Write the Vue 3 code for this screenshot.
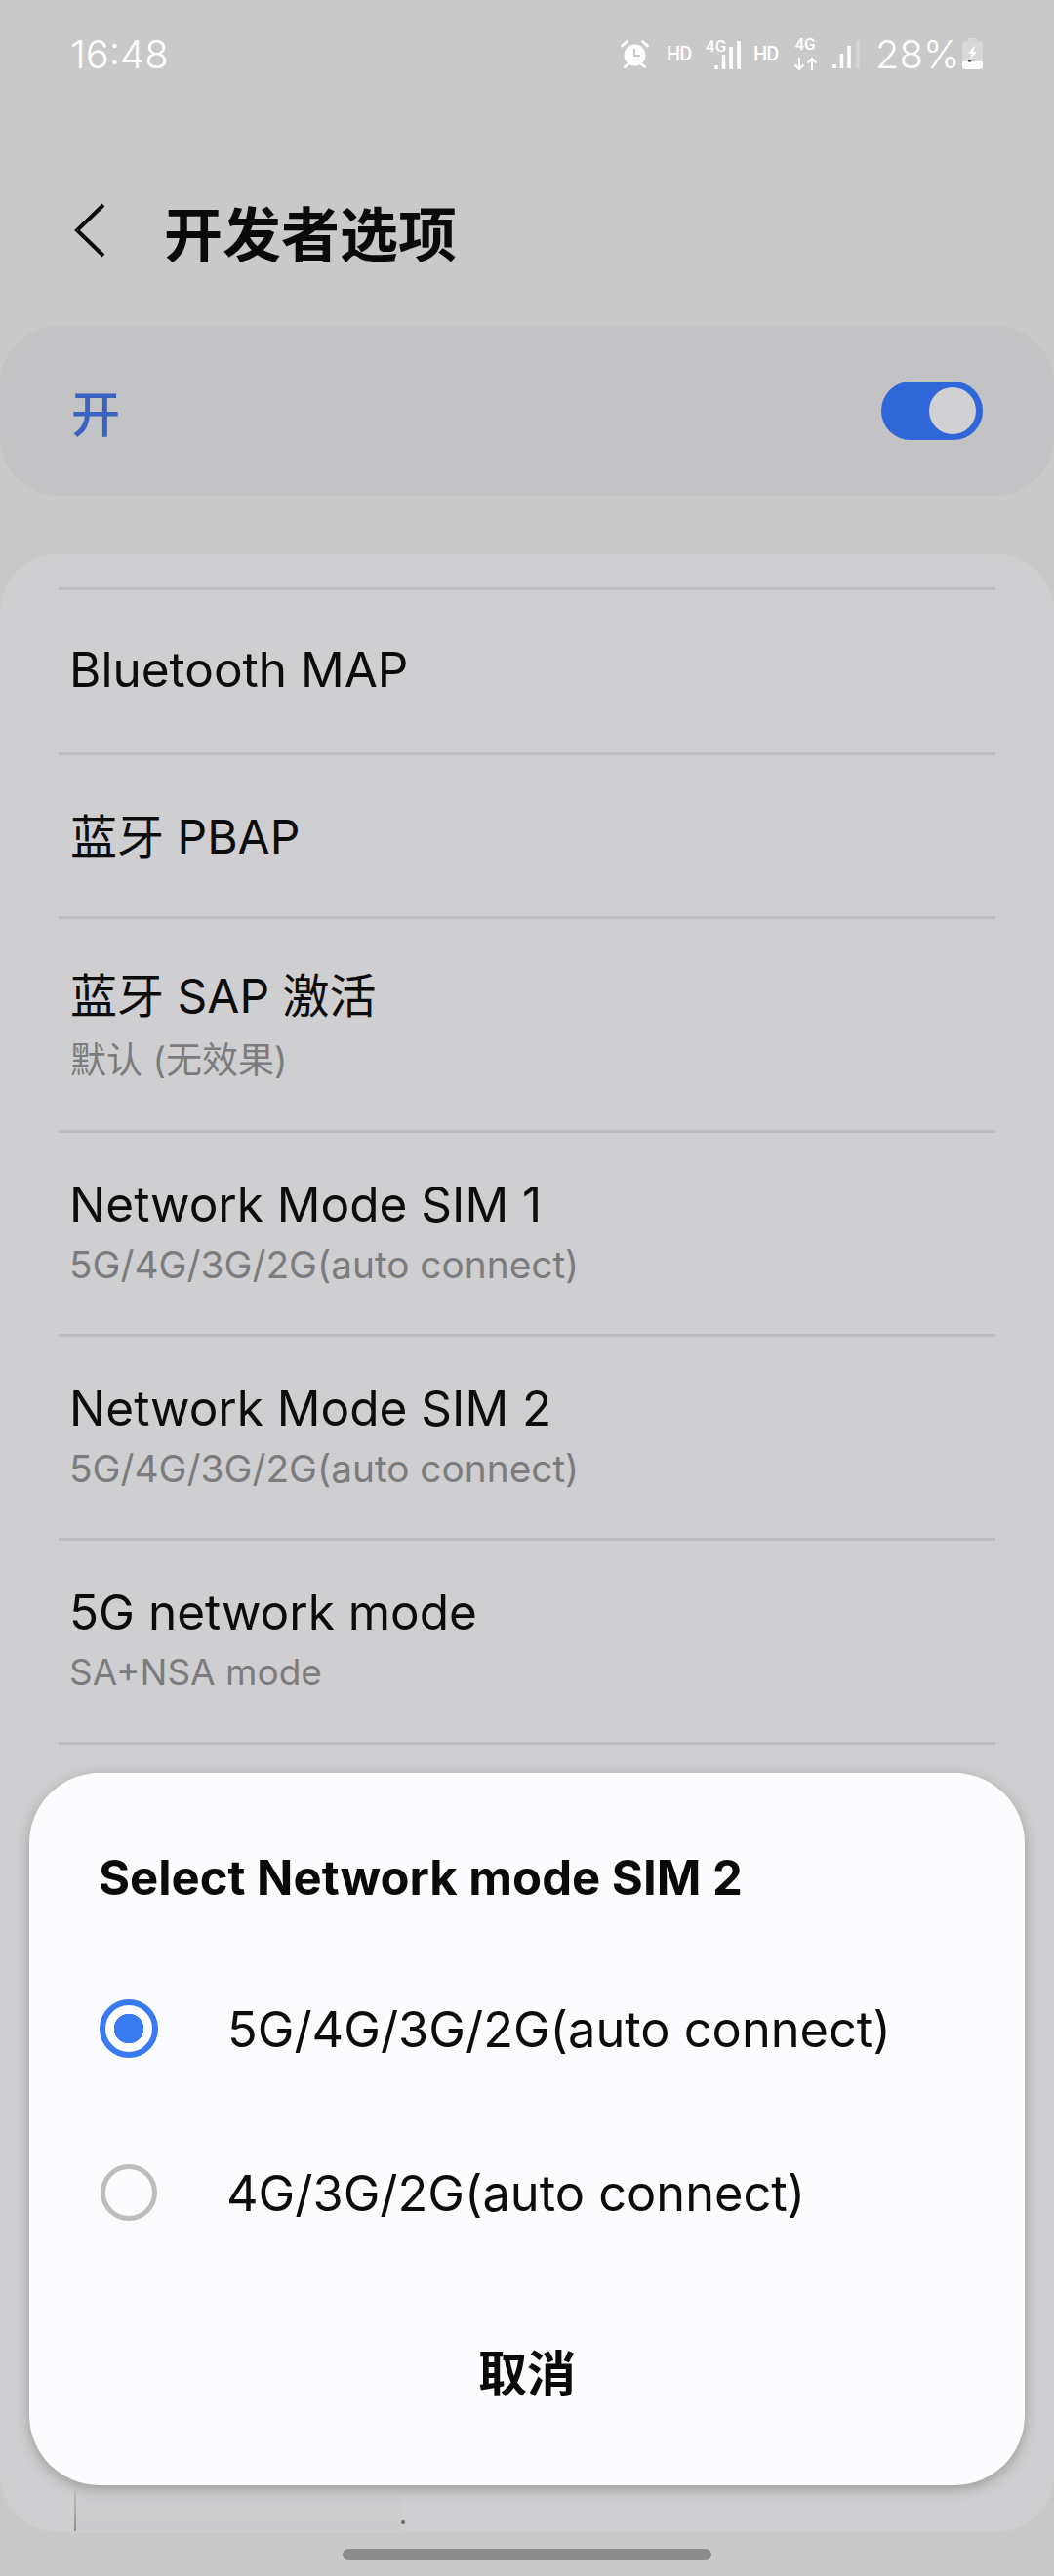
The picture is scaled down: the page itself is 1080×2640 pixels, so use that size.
<script setup>
const rows = [
  { title: "Bluetooth MAP", h: 169 },
  { title: "蓝牙 PBAP", h: 168, cjk: true },
  { title: "蓝牙 SAP 激活", sub: "默认 (无效果)", h: 219, cjk: true },
  { title: "Network Mode SIM 1", sub: "5G/4G/3G/2G(auto connect)", h: 209 },
  { title: "Network Mode SIM 2", sub: "5G/4G/3G/2G(auto connect)", h: 209 },
  { title: "5G network mode", sub: "SA+NSA mode", h: 209, small: true },
];
const options = [
  { label: "5G/4G/3G/2G(auto connect)", on: true },
  { label: "4G/3G/2G(auto connect)", on: false },
];
</script>

<template>
  <div class="screen">
    <div class="status">
      <span class="time">16:48</span>
      <div class="status-right">
        <svg class="alarm" width="29" height="29" viewBox="0 0 29 29">
          <circle cx="14.5" cy="15.500" r="11" fill="#fff" />
          <path d="M14 9v7h6" fill="none" stroke="#c9c9c9" stroke-width="2.200" />
          <path d="M1.500 6l5-4.500M27.500 6l-5-4.500" stroke="#fff" stroke-width="2.800" stroke-linecap="round" />
          <path d="M4.500 27.500l3-2.500M24.500 27.500l-3-2.500" stroke="#fff" stroke-width="2.800" stroke-linecap="round" />
        </svg>
        <span class="hd hd1">HD</span>
        <div class="net1">
          <span class="g4">4G</span>
          <svg width="28" height="29" viewBox="0 0 28 29">
            <path d="M2 29v-4M9.500 29V14M17 29V6M25 29V0" stroke="#fff" stroke-width="3.500" fill="none" />
          </svg>
        </div>
        <span class="hd hd2">HD</span>
        <div class="net2">
          <span class="g4">4G</span>
          <svg width="25" height="13" viewBox="0 0 25 13">
            <path d="M6 0v12M1.500 7.500L6 12l4.500-4.500M19 13V1M14.500 5.500L19 1l4.500 4.500" stroke="#fff" stroke-width="2" fill="none" />
          </svg>
        </div>
        <svg class="bars2" width="30" height="29" viewBox="0 0 30 29">
          <path d="M2 29v-4M9.500 29V14M17 29V6" stroke="#fff" stroke-width="3.500" fill="none" />
          <path d="M26 29V0" stroke="#d6d6d6" stroke-width="3.500" fill="none" />
        </svg>
        <span class="pct">28%</span>
        <svg class="batt" width="21" height="32" viewBox="0 0 21 32">
          <path d="M6 0h9v3h3a3 3 0 0 1 3 3v23a3 3 0 0 1-3 3H3a3 3 0 0 1-3-3V6a3 3 0 0 1 3-3h3z" fill="#d8d8d8" />
          <path d="M0 24h21v5a3 3 0 0 1-3 3H3a3 3 0 0 1-3-3z" fill="#fff" />
          <path d="M13 7l-7 9h4l-2 6 7-8h-4z" fill="#fff" />
          <rect x="6" y="23" width="3" height="1.500" fill="#444" />
        </svg>
      </div>
    </div>

    <div class="header">
      <svg class="back" width="34" height="56" viewBox="0 0 34 56">
        <path d="M31 2L4 28l27 26" fill="none" stroke="#0a0a0a" stroke-width="4" />
      </svg>
      <h1 class="title">开发者选项</h1>
    </div>

    <div class="master">
      <span class="master-label">开</span>
      <div class="switch"><div class="thumb"></div></div>
    </div>

    <div class="card">
      <div v-for="r in rows" :key="r.title" class="row" :class="{ cjk: r.cjk, small: r.small }" :style="{ height: r.h + 'px' }">
        <div class="row-title">{{ r.title }}</div>
        <div v-if="r.sub" class="row-sub">{{ r.sub }}</div>
      </div>
      <div class="row-end"></div>
    </div>

    <!-- leftovers of the row hidden behind the dialog -->
    <div class="peek"></div>
    <div class="peek-dot"></div>

    <div class="home-bar"></div>

    <div class="dialog">
      <div class="dialog-title">Select Network mode SIM 2</div>
      <div class="options">
        <div v-for="o in options" :key="o.label" class="option">
          <span class="radio" :class="{ on: o.on }"></span>
          <span class="option-label">{{ o.label }}</span>
        </div>
      </div>
      <div class="cancel">取消</div>
    </div>
  </div>
</template>

<style>
body {
  background: #c9c9c9;
}
</style>

<style scoped>
.screen {
  position: relative;
  width: 1080px;
  height: 2640px;
  overflow: hidden;
  background: #c9c9c9;
  font-family: Inter, "Noto Sans CJK SC", sans-serif;
  display: flex;
  flex-direction: column;
}

.status {
  height: 110px;
  flex: none;
  display: flex;
  align-items: center;
  justify-content: space-between;
  padding: 0 73px 0 72px;
  color: #fff;
}
.time {
  font-size: 40px;
  font-weight: 300;
}
.status-right {
  display: flex;
  align-items: center;
  font-family: Roboto, sans-serif;
}
.hd {
  width: 26px;
  font-size: 20px;
  font-weight: 500;
  letter-spacing: -1px;
  white-space: nowrap;
}
.hd1 {
  margin-left: 18px;
}
.hd2 {
  margin-left: 12px;
}
.net1 {
  display: flex;
  align-items: flex-start;
  margin-left: 14px;
}
.g4 {
  font-size: 17px;
  font-weight: 500;
  line-height: 14px;
}
.net1 .g4 {
  width: 21px;
  margin-right: -12px;
}
.net1 svg {
  margin-top: 2px;
}
.net2 {
  width: 24px;
  display: flex;
  flex-direction: column;
  align-items: center;
  gap: 7px;
  margin-left: 15px;
}
.bars2 {
  margin-left: 16px;
}
.pct {
  width: 81px;
  font-family: Inter, sans-serif;
  font-size: 40px;
  font-weight: 300;
  margin-left: 14px;
  white-space: nowrap;
}
.batt {
  margin-left: 8px;
}

.header {
  height: 110px;
  flex: none;
  display: flex;
  align-items: center;
  padding-left: 75px;
  margin-top: 71px;
}
.back {
  flex: none;
}
.title {
  margin: 0 0 0 59px;
  font-size: 60px;
  font-weight: 700;
  color: #0a0a0a;
}

.master {
  flex: none;
  height: 174px;
  margin-top: 43px;
  border-radius: 60px;
  background: #c3c3c5;
  display: flex;
  align-items: center;
  justify-content: space-between;
  padding: 0 73px;
}
.master-label {
  font-size: 50px;
  font-weight: 500;
  color: #3a62c0;
}
.switch {
  width: 104px;
  height: 60px;
  border-radius: 30px;
  background: #2f66d8;
  position: relative;
}
.thumb {
  position: absolute;
  right: 7px;
  top: 6px;
  width: 48px;
  height: 48px;
  border-radius: 50%;
  background: #d0d0d2;
}

.card {
  flex: none;
  height: 2027px;
  margin-top: 60px;
  padding-top: 34px;
  box-sizing: border-box;
  border-radius: 60px;
  background: #cfcfd1;
}
.row {
  box-sizing: border-box;
  margin: 0 60px;
  padding: 0 11px 4px;
  border-top: 3px solid #bebec0;
  display: flex;
  flex-direction: column;
  justify-content: center;
}
.row-end {
  margin: 0 60px;
  border-top: 3px solid #bebec0;
}
.row-title {
  font-size: 49.5px;
  line-height: 60px;
  color: #0c0c0c;
}
.row-sub {
  font-size: 38.8px;
  line-height: 50px;
  margin-top: 7px;
  color: #7c7c7e;
}
.row.cjk {
  padding: 6px 12px 4px;
}
.cjk .row-title {
  font-size: 48px;
}
.cjk .row-sub {
  font-size: 37px;
  margin-top: 11px;
}
.small .row-sub {
  font-size: 37px;
}

.peek {
  position: absolute;
  left: 76px;
  top: 2553px;
  width: 335px;
  height: 41px;
  background: linear-gradient(90deg, #8f8f91 0, #8f8f91 2px, #cbcbcd 2px);
  -webkit-mask-image: linear-gradient(180deg, rgba(0, 0, 0, 0.25), #000);
  mask-image: linear-gradient(180deg, rgba(0, 0, 0, 0.25), #000);
}
.peek-dot {
  position: absolute;
  left: 411px;
  top: 2583px;
  width: 4px;
  height: 4px;
  border-radius: 50%;
  background: #6a6a6c;
}
.home-bar {
  position: absolute;
  left: 351px;
  top: 2612px;
  width: 378px;
  height: 12px;
  border-radius: 6px;
  background: #8c8c8c;
}

.dialog {
  position: absolute;
  left: 30px;
  top: 1817px;
  width: 1020px;
  height: 730px;
  box-sizing: border-box;
  padding: 72px 72px 0;
  background: #fcfcfe;
  border-radius: 72px;
  box-shadow: 0 4px 14px rgba(0, 0, 0, 0.25);
}
.dialog-title {
  margin-left: -1px;
  font-size: 49px;
  font-weight: 700;
  color: #0a0a0a;
  line-height: 72px;
}
.options {
  margin-top: 34px;
}
.option {
  height: 168px;
  display: flex;
  align-items: center;
}
.radio {
  box-sizing: border-box;
  flex: none;
  width: 58px;
  height: 58px;
  border-radius: 50%;
  border: 5px solid #bdbdbd;
  margin: 0 71px 0 1px;
}
.radio.on {
  width: 60px;
  height: 60px;
  border: 6px solid #3a7af0;
  background: radial-gradient(circle, #3a7af0 15px, transparent 15.5px);
  margin: 0 71px 0 0;
}
.option-label {
  font-size: 50.5px;
  color: #0c0c0c;
}
.cancel {
  text-align: center;
  font-size: 50px;
  line-height: 60px;
  font-weight: 700;
  color: #0a0a0a;
  margin-top: 72px;
}
</style>
